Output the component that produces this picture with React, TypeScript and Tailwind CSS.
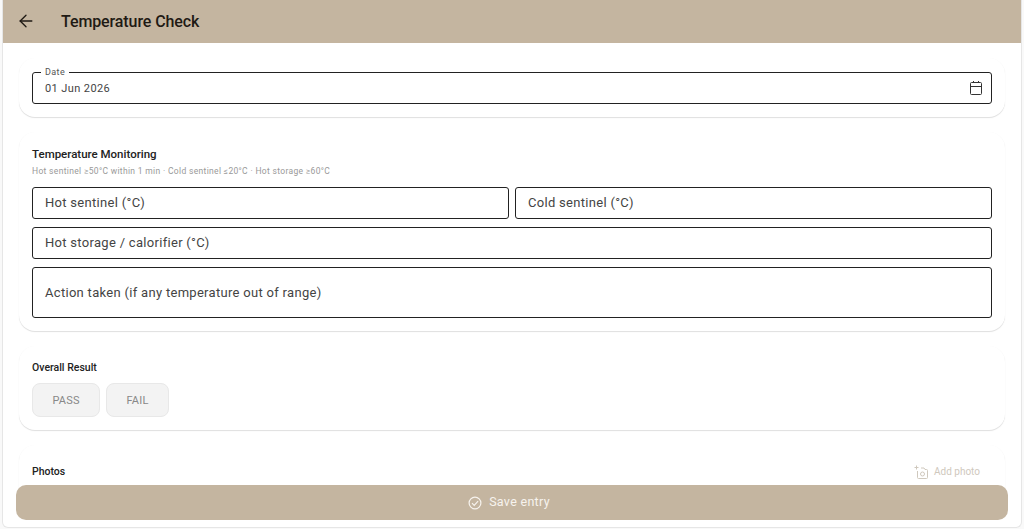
import { ArrowLeft } from 'lucide-react';

function Field({ label, className = '' }: { label: string; className?: string }) {
  return (
    <div className={`flex items-center rounded-[3px] border border-[#222] px-3 text-[13px] tracking-[0.3px] text-[#444] ${className}`}>
      {label}
    </div>
  );
}

function Card({ className = '', children }: { className?: string; children: React.ReactNode }) {
  return (
    <div className={`rounded-2xl bg-white px-[13px] shadow-[0_1px_1px_rgba(0,0,0,0.13),0_0_1px_rgba(0,0,0,0.03)] ${className}`}>
      {children}
    </div>
  );
}

function CalendarIcon() {
  return (
    <svg viewBox="0 0 14 16" className="h-4 w-[14px] text-[#333]" fill="none" stroke="currentColor" strokeWidth="1">
      <rect x="1.5" y="2.5" width="11" height="12" rx="1" />
      <path d="M1.5 6.5h11M4.5 1v2M9.5 1v2" />
    </svg>
  );
}

function AddPhotoIcon() {
  return (
    <svg viewBox="0 0 14 14" className="h-[14px] w-[14px]" fill="none" stroke="currentColor" strokeWidth="1">
      <path d="M2.5 0.5v4M0.5 2.5h4" />
      <path d="M3.5 6v6.5a1 1 0 0 0 1 1h8a1 1 0 0 0 1-1v-7a1 1 0 0 0-1-1h-1.5l-1-1.5h-3" />
      <circle cx="8.5" cy="9" r="2" />
    </svg>
  );
}

function CheckIcon() {
  return (
    <svg viewBox="0 0 14 14" className="h-[14px] w-[14px]" fill="none" stroke="currentColor" strokeWidth="1.2">
      <circle cx="7" cy="7" r="5.9" />
      <path d="M4 7.2l2.2 2.2 3.9-4.3" />
    </svg>
  );
}

export default function App() {
  return (
    <div className="relative h-[529px] w-[1024px] overflow-hidden bg-[#f9f9f9] px-[2px] pb-[1px] font-['Roboto',sans-serif]">
      <div className="flex h-full flex-col overflow-hidden rounded-b-md border-x border-b border-[#e6e6e6] bg-white">
        {/* App bar */}
        <div className="flex h-[43px] shrink-0 items-center bg-[#c4b5a0] pl-[13px]">
          <ArrowLeft className="mb-[2px] h-5 w-5 text-[#1f1a14]" strokeWidth={1.6} />
          <h1 className="ml-[25px] text-base font-medium tracking-[-0.1px] text-[#1f1a14]">Temperature Check</h1>
        </div>

        <div className="flex flex-col gap-[15px] px-4 pt-[15px]">
          {/* Date */}
          <Card className="h-[59px] pt-[14px]">
            <div className="relative flex h-8 items-center justify-between rounded-[3px] border border-[#222] pr-2 pl-3 text-[11px] tracking-[0.4px] text-[#444]">
              <span className="absolute -top-[6px] left-2 bg-white px-1 text-[9px] leading-[10px] text-[#555]">Date</span>
              <span className="pt-[2px]">01 Jun 2026</span>
              <CalendarIcon />
            </div>
          </Card>

          {/* Temperature */}
          <Card className="h-[199px] pt-4">
            <h2 className="text-[11.5px] leading-[13px] font-medium text-[#222]">Temperature Monitoring</h2>
            <p className="mt-[5px] text-[8.5px] leading-[10px] tracking-[0.33px] text-[#999]">
              Hot sentinel ≥50°C within 1 min · Cold sentinel ≤20°C · Hot storage ≥60°C
            </p>
            <div className="mt-[11px] flex flex-col gap-2">
              <div className="flex gap-[6px]">
                <Field label="Hot sentinel (°C)" className="h-8 flex-1" />
                <Field label="Cold sentinel (°C)" className="h-8 w-[477px]" />
              </div>
              <Field label="Hot storage / calorifier (°C)" className="h-8" />
              <Field label="Action taken (if any temperature out of range)" className="h-[51px]" />
            </div>
          </Card>

          {/* Overall result */}
          <Card className="h-[84px] pt-[15px]">
            <h2 className="text-[10.5px] leading-[13px] font-medium text-[#222]">Overall Result</h2>
            <div className="mt-[9px] flex gap-[6px]">
              <div className="flex h-[34px] w-[68px] items-center justify-center rounded-lg border border-[#e8e8e8] bg-[#f3f3f3] pt-[2px] text-[11px] tracking-[0.2px] text-[#888]">PASS</div>
              <div className="flex h-[34px] w-[63px] items-center justify-center rounded-lg border border-[#e8e8e8] bg-[#f3f3f3] pt-[2px] text-[11px] tracking-[0.2px] text-[#888]">FAIL</div>
            </div>
          </Card>

          {/* Photos */}
          <Card className="h-[60px] pt-[19px]">
            <div className="flex items-center justify-between pr-3">
              <h2 className="text-[10.5px] leading-[13px] font-medium text-[#222]">Photos</h2>
              <span className="flex items-center gap-[6px] text-[10px] text-[#cfc8bd]">
                <AddPhotoIcon />
                Add photo
              </span>
            </div>
          </Card>
        </div>
      </div>

      {/* Save button */}
      <button className="absolute top-[485px] left-4 flex h-[35px] w-[992px] items-center justify-center gap-[7px] rounded-[10px] bg-[#c4b5a0] pr-[6px] text-[12.5px] tracking-[0.3px] text-[#f7f3ee]">
        <CheckIcon />
        Save entry
      </button>
    </div>
  );
}
